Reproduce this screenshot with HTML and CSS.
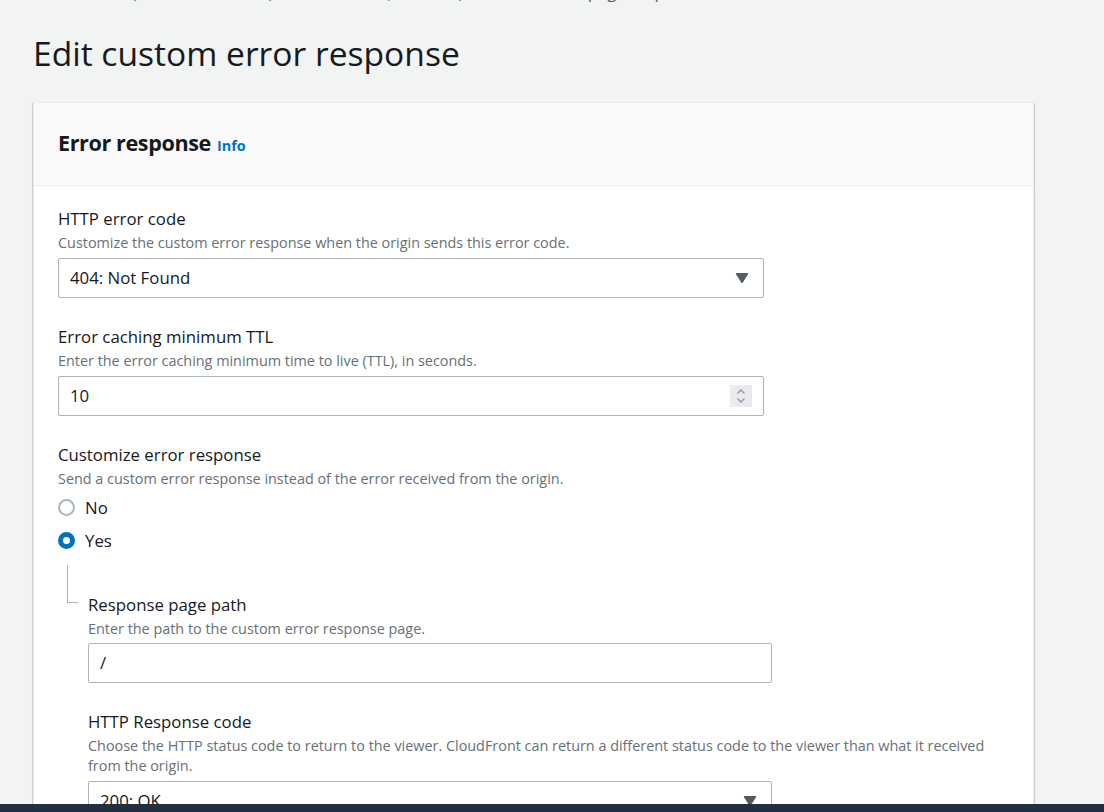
FILE: index.html
```html
<!DOCTYPE html>
<html lang="en">
<head>
<meta charset="utf-8">
<title>Edit custom error response</title>
<link rel="stylesheet" href="styles.css">
</head>
<body>
<div class="page">
  <nav class="breadcrumbs">
    <span class="crumb link">CloudFront</span>
    <svg class="sep" width="8" height="12" viewBox="0 0 8 12"><path d="M1.5 1 L6.5 6 L1.5 11" fill="none" stroke="#879596" stroke-width="1.6"/></svg>
    <span class="crumb link">Distributions</span>
    <svg class="sep" width="8" height="12" viewBox="0 0 8 12"><path d="M1.5 1 L6.5 6 L1.5 11" fill="none" stroke="#879596" stroke-width="1.6"/></svg>
    <span class="crumb link">E1XH7RT4ZQ2V8LM</span>
    <svg class="sep" width="8" height="12" viewBox="0 0 8 12"><path d="M1.5 1 L6.5 6 L1.5 11" fill="none" stroke="#879596" stroke-width="1.6"/></svg>
    <span class="crumb">Custom error page response</span>
  </nav>

  <h1 class="page-title">Edit custom error response</h1>

  <section class="card">
    <header class="card-header">
      <h2 class="card-title">Error response</h2>
      <a class="info-link">Info</a>
    </header>

    <div class="card-body">
      <div class="field">
        <div class="field-label">HTTP error code</div>
        <div class="field-desc">Customize the custom error response when the origin sends this error code.</div>
        <div class="control select">
          <span class="control-text">404: Not Found</span>
          <svg class="caret" width="14" height="10" viewBox="0 0 14 10"><path d="M1 1.2 Q0.4 0 1.8 0 H12.2 Q13.6 0 13 1.2 L7.8 9.4 Q7 10.4 6.2 9.4 Z" fill="#545b64"/></svg>
        </div>
      </div>

      <div class="field">
        <div class="field-label">Error caching minimum TTL</div>
        <div class="field-desc">Enter the error caching minimum time to live (TTL), in seconds.</div>
        <div class="control">
          <span class="control-text">10</span>
          <span class="spinner">
            <svg width="10" height="16" viewBox="0 0 10 16"><path d="M1.5 5.5 L5 2 L8.5 5.5 M1.5 10.5 L5 14 L8.5 10.5" fill="none" stroke="#8d99a8" stroke-width="1.3"/></svg>
          </span>
        </div>
      </div>

      <div class="field field-radio">
        <div class="field-label">Customize error response</div>
        <div class="field-desc">Send a custom error response instead of the error received from the origin.</div>
        <div class="radio-group">
          <div class="radio-row"><span class="radio"></span><span class="radio-label">No</span></div>
          <div class="radio-row"><span class="radio checked"></span><span class="radio-label">Yes</span></div>
        </div>
      </div>

      <div class="nested">
        <div class="tree"><div class="tree-line"></div></div>
        <div class="nested-content">
          <div class="field">
            <div class="field-label">Response page path</div>
            <div class="field-desc">Enter the path to the custom error response page.</div>
            <div class="control control-tight">
              <span class="control-text">/</span>
            </div>
          </div>
          <div class="field">
            <div class="field-label">HTTP Response code</div>
            <div class="field-desc">Choose the HTTP status code to return to the viewer. CloudFront can return a different status code to the viewer than what it received from the origin.</div>
            <div class="control select">
              <span class="control-text">200: OK</span>
              <svg class="caret" width="14" height="10" viewBox="0 0 14 10"><path d="M1 1.2 Q0.4 0 1.8 0 H12.2 Q13.6 0 13 1.2 L7.8 9.4 Q7 10.4 6.2 9.4 Z" fill="#545b64"/></svg>
            </div>
          </div>
        </div>
      </div>
    </div>
  </section>
</div>
<div class="footer-bar"></div>
</body>
</html>
```

FILE: styles.css
```css
* { box-sizing: border-box; }

html, body {
  margin: 0;
  padding: 0;
  background: #f2f3f3;
  font-family: "Open Sans", "Noto Sans", sans-serif;
  color: #16191f;
}

.page {
  padding: 0 33px 60px;
}

.breadcrumbs {
  display: flex;
  align-items: center;
  gap: 13px;
  margin-top: -20px;
  height: 24px;
  font-size: 16.8px;
  line-height: 24px;
  white-space: nowrap;
  color: #545b64;
}

.breadcrumbs .link { color: #0073bb; }
.breadcrumbs .sep { flex: 0 0 auto; margin-top: 8px; }

.page-title {
  margin: 29px 0 29px;
  font-size: 33.6px;
  line-height: 40px;
  font-weight: 400;
  color: #16191f;
}

.card {
  width: 1001px;
  background: #fff;
  border: 1px solid #eaeded;
  border-radius: 1px;
  box-shadow: 0 1px 1px 0 rgba(0, 28, 36, 0.3), 1px 1px 1px 0 rgba(0, 28, 36, 0.15), -1px 1px 1px 0 rgba(0, 28, 36, 0.15);
}

.card-header {
  display: flex;
  align-items: baseline;
  gap: 6px;
  padding: 26px 24px 28px;
  background: #fafafa;
  border-bottom: 1px solid #eaeded;
}

.card-title {
  margin: 0;
  font-size: 21.6px;
  line-height: 28px;
  font-weight: 700;
  letter-spacing: -0.4px;
  color: #16191f;
}

.info-link {
  font-size: 14.4px;
  font-weight: 700;
  color: #0073bb;
}

.card-body {
  padding: 20px 24px 40px;
}

.field {
  margin-bottom: 26px;
}

.field-label {
  font-size: 16.8px;
  line-height: 26px;
  color: #16191f;
}

.field-desc {
  margin-top: 1px;
  font-size: 14.4px;
  line-height: 20px;
  color: #687078;
}

.control {
  display: flex;
  align-items: center;
  justify-content: space-between;
  width: calc(75% - 7px);
  height: 40px;
  margin-top: 5px;
  padding: 0 11px;
  background: #fff;
  border: 1px solid #aab7b8;
  border-radius: 2px;
}

.control-tight {
  margin-top: 4px;
}

.control-text {
  font-size: 16.8px;
  line-height: 24px;
  color: #16191f;
}

.select .caret {
  margin-right: 3px;
}

.spinner {
  display: flex;
  align-items: center;
  justify-content: center;
  width: 22px;
  height: 22px;
  background: #e9e9ef;
}

.field-radio {
  margin-bottom: 0;
}

.radio-group {
  display: flex;
  flex-direction: column;
  padding-top: 2px;
}

.radio-row {
  display: flex;
  align-items: center;
  gap: 10px;
  height: 33px;
}

.radio {
  width: 17px;
  height: 17px;
  border-radius: 50%;
  border: 2px solid #aab7b8;
  background: #fff;
}

.radio.checked {
  border: 5px solid #0073bb;
}

.radio-label {
  font-size: 16.8px;
  line-height: 24px;
  color: #16191f;
}

.nested {
  display: flex;
}

.tree {
  flex: 0 0 30px;
  padding-left: 9px;
  padding-top: 8px;
}

.tree-line {
  width: 11px;
  height: 38px;
  border-left: 1px solid #aab7b8;
  border-bottom: 1px solid #aab7b8;
}

.nested-content {
  flex: 1;
  padding-top: 35px;
}

.footer-bar {
  position: fixed;
  left: 0;
  right: 0;
  bottom: 0;
  height: 8px;
  background: #232f3e;
}
```
